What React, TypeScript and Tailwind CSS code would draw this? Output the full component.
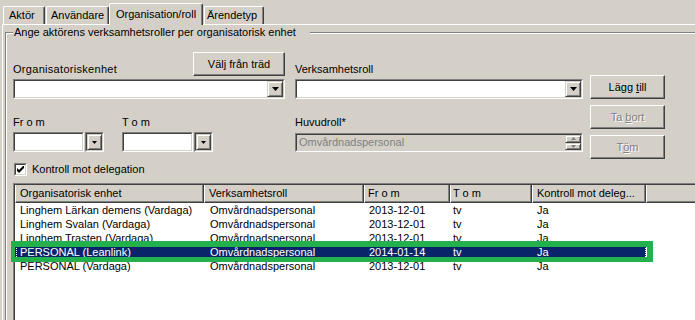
import React from "react";

// Classic Windows 2000 style form: "Organisation/roll" tab of an actor editor.

const rows = [
  ["Linghem Lärkan demens (Vardaga)", "Omvårdnadspersonal", "2013-12-01", "tv", "Ja"],
  ["Linghem Svalan (Vardaga)", "Omvårdnadspersonal", "2013-12-01", "tv", "Ja"],
  ["Linghem Trasten (Vardaga)", "Omvårdnadspersonal", "2013-12-01", "tv", "Ja"],
  ["PERSONAL (Leanlink)", "Omvårdnadspersonal", "2014-01-14", "tv", "Ja"],
  ["PERSONAL (Vardaga)", "Omvårdnadspersonal", "2013-12-01", "tv", "Ja"],
];
const SELECTED = 3;

const cols = [
  { title: "Organisatorisk enhet", head: "w-[189px] pl-[4px]", cell: "w-[189px] pl-[5px]" },
  { title: "Verksamhetsroll", head: "w-[160px] pl-[4px]", cell: "w-[160px] pl-[6px]" },
  { title: "Fr o m", head: "w-[86px] pl-[3px]", cell: "w-[86px] pl-[5px]" },
  { title: "T o m", head: "w-[82px] pl-[2px]", cell: "w-[82px] pl-[3px]" },
  { title: "Kontroll mot deleg...", head: "w-[114px] pl-[4px]", cell: "w-[114px] pl-[5px]" },
];

function Sunken({ className = "", inner = "", children }: { className?: string; inner?: string; children?: React.ReactNode }) {
  return (
    <div className={`border border-t-[#808080] border-l-[#808080] border-b-white border-r-white ${className}`}>
      <div className={`h-full border border-t-[#404040] border-l-[#404040] border-b-[#d4d0c8] border-r-[#d4d0c8] ${inner}`}>
        {children}
      </div>
    </div>
  );
}

function DropBtn({ small = false }: { small?: boolean }) {
  return (
    <div className={`${small ? "w-full" : "w-[16px]"} h-full flex items-center justify-center bg-[#d4d0c8] border border-t-[#d4d0c8] border-l-[#d4d0c8] border-b-[#404040] border-r-[#404040] shadow-[inset_1px_1px_0_#fff,inset_-1px_-1px_0_#808080]`}>
      {small ? (
        <svg width="5" height="3" viewBox="0 0 5 3"><path d="M0 0h5L2.5 3z" fill="#000" /></svg>
      ) : (
        <svg width="7" height="4" viewBox="0 0 7 4"><path d="M0 0h7L3.5 4z" fill="#000" /></svg>
      )}
    </div>
  );
}

function Combo({ className = "" }: { className?: string }) {
  return (
    <Sunken className={`h-[20px] ${className}`} inner="bg-white flex justify-end">
      <DropBtn />
    </Sunken>
  );
}

function DateBox() {
  return (
    <div className="flex">
      <Sunken className="w-[71px] h-[20px]" inner="bg-white" />
      <Sunken className="ml-[1px] w-[19px] h-[20px]" inner="flex">
        <DropBtn small />
      </Sunken>
    </div>
  );
}

function Btn({ className = "", disabled = false, children }: { className?: string; disabled?: boolean; children: React.ReactNode }) {
  return (
    <div
      className={`flex items-center justify-center bg-[#d4d0c8] border border-t-white border-l-white border-b-[#404040] border-r-[#404040] shadow-[inset_-1px_-1px_0_#808080] ${
        disabled ? "text-[#808080] [text-shadow:1px_1px_0_#fff]" : "text-black"
      } ${className}`}
    >
      {children}
    </div>
  );
}

function Tab({ className = "", children }: { className?: string; children: React.ReactNode }) {
  return (
    <div className={`h-[18px] pt-[2px] rounded-t-[2px] border-l border-t border-white border-r border-r-[#404040] shadow-[inset_-1px_0_0_#808080] ${className}`}>
      {children}
    </div>
  );
}

function SpinHalf({ up }: { up: boolean }) {
  return (
    <div className="flex-1 flex items-center justify-center bg-[#d4d0c8] border border-t-[#d4d0c8] border-l-[#d4d0c8] border-b-[#404040] border-r-[#404040] shadow-[inset_1px_1px_0_#fff,inset_-1px_-1px_0_#808080]">
      <svg width="5" height="3" viewBox="0 0 5 3">
        <path d={up ? "M2.5 0L5 3H0z" : "M0 0h5L2.5 3z"} fill="#808080" />
      </svg>
    </div>
  );
}

export default function App() {
  return (
    <div className="w-[695px] h-[320px] overflow-hidden bg-[#d4d0c8] text-black text-[11px] leading-[13px] font-['Liberation_Sans',Arial,sans-serif]">
      {/* Tab strip */}
      <div className="flex items-end h-[24px]">
        <Tab className="ml-[3px] w-[42px] pl-[5px]">Aktör</Tab>
        <Tab className="ml-[1px] w-[63px] pl-[4px]">Användare</Tab>
        <div className="relative z-10 -mb-px h-[22px] w-[94px] pl-[6px] pt-[4px] bg-[#d4d0c8] rounded-t-[2px] border-l border-t border-white border-r border-r-[#404040] shadow-[inset_-1px_0_0_#808080]">
          Organisation/roll
        </div>
        <Tab className="ml-[1px] w-[60px] pl-[2px]">Ärendetyp</Tab>
      </div>

      {/* Tab panel */}
      <div className="ml-[2px] w-[760px] h-[320px] border-l border-t border-white">
        {/* Group box */}
        <div className="ml-[2px] mt-[7px] w-[740px] h-[320px] border-l border-t border-[#808080] shadow-[inset_1px_1px_0_#fff]">
          <div className="-mt-[7px] ml-[7px] w-fit bg-[#d4d0c8] pl-[1px] pr-[14px]">
            Ange aktörens verksamhetsroller per organisatorisk enhet
          </div>

          <div className="ml-[7px] mt-[13px] flex">
            {/* Left column */}
            <div className="w-[272px] flex flex-col">
              <div className="h-[24px] flex items-end justify-between">
                <span className="tracking-[0.3px]">Organisatoriskenhet</span>
                <Btn className="w-[92px] h-[24px] self-start">Välj från träd</Btn>
              </div>
              <Combo className="mt-[3px]" />
              <div className="mt-[17px] flex">
                <div className="w-[109px]">
                  <div className="h-[13px]">Fr o m</div>
                  <div className="mt-[3px]">
                    <DateBox />
                  </div>
                </div>
                <div>
                  <div className="h-[13px]">T o m</div>
                  <div className="mt-[3px]">
                    <DateBox />
                  </div>
                </div>
              </div>
            </div>

            {/* Middle column */}
            <div className="ml-[10px] w-[288px] pt-[11px] flex flex-col">
              <div className="h-[13px]">Verksamhetsroll</div>
              <Combo className="mt-[3px]" />
              <div className="mt-[17px] h-[13px]">Huvudroll*</div>
              <Sunken className="mt-[4px] h-[19px]" inner="flex bg-[#d4d0c8]">
                <div className="flex-1 flex items-center pl-[2px] text-[#808080]">Omvårdnadspersonal</div>
                <div className="w-[16px] flex flex-col">
                  <SpinHalf up />
                  <SpinHalf up={false} />
                </div>
              </Sunken>
            </div>

            {/* Buttons */}
            <div className="ml-[7px] w-[75px] pt-[23px] flex flex-col">
              <Btn className="h-[24px]">
                <span>
                  Lägg <u>t</u>ill
                </span>
              </Btn>
              <Btn className="mt-[6px] h-[24px]" disabled>
                <span>
                  Ta <u>b</u>ort
                </span>
              </Btn>
              <Btn className="mt-[6px] h-[24px]" disabled>
                <span>
                  T<u>ö</u>m
                </span>
              </Btn>
            </div>
          </div>

          {/* Checkbox */}
          <div className="ml-[7px] mt-[4px] h-[13px] flex items-center">
            <div className="ml-[1px] w-[13px] h-[13px] border border-t-[#808080] border-l-[#808080] border-b-white border-r-white">
              <div className="w-full h-full flex items-center justify-center bg-white border border-t-[#404040] border-l-[#404040] border-b-[#d4d0c8] border-r-[#d4d0c8]">
                <svg width="7" height="7" viewBox="0 0 7 7">
                  <path d="M0 2L2 4L7 -1V2L2 7L0 5Z" fill="#000" />
                </svg>
              </div>
            </div>
            <span className="ml-[5px]">Kontroll mot delegation</span>
          </div>

          {/* List view */}
          <div className="ml-[7px] mt-[7px] w-[720px] h-[150px] border-l border-t border-[#808080]">
            <div className="h-full bg-white border-l border-t border-[#404040]">
              <div className="flex h-[18px]">
                {cols.map((c) => (
                  <div
                    key={c.title}
                    className={`${c.head} shrink-0 h-full flex items-center truncate bg-[#d4d0c8] border-l border-white border-r border-r-[#404040] border-b border-b-[#404040] shadow-[inset_-1px_-1px_0_#808080]`}
                  >
                    {c.title}
                  </div>
                ))}
                <div className="flex-1 h-full bg-[#d4d0c8] border-l border-white border-b border-b-[#404040] shadow-[inset_0_-1px_0_#808080]" />
              </div>

              {rows.map((r, i) => {
                const sel = i === SELECTED;
                return (
                  <div
                    key={i}
                    className={`relative flex items-center h-[14px] w-[631px] ${sel ? "bg-[#0a246a] text-white" : ""}`}
                  >
                    {r.map((t, j) => (
                      <div key={j} className={`${cols[j].cell} shrink-0 truncate`}>
                        {t}
                      </div>
                    ))}
                    {sel && (
                      <>
                        <div className="absolute inset-y-0 left-[1px] right-0 border-x border-dotted border-white" />
                        <div className="absolute left-[-4px] top-[-4px] w-[642px] h-[21px] border-[#22b14c] border-t-[6px] border-b-[5px] border-l-[4px] border-r-[6px]" />
                      </>
                    )}
                  </div>
                );
              })}
            </div>
          </div>
        </div>
      </div>
    </div>
  );
}
